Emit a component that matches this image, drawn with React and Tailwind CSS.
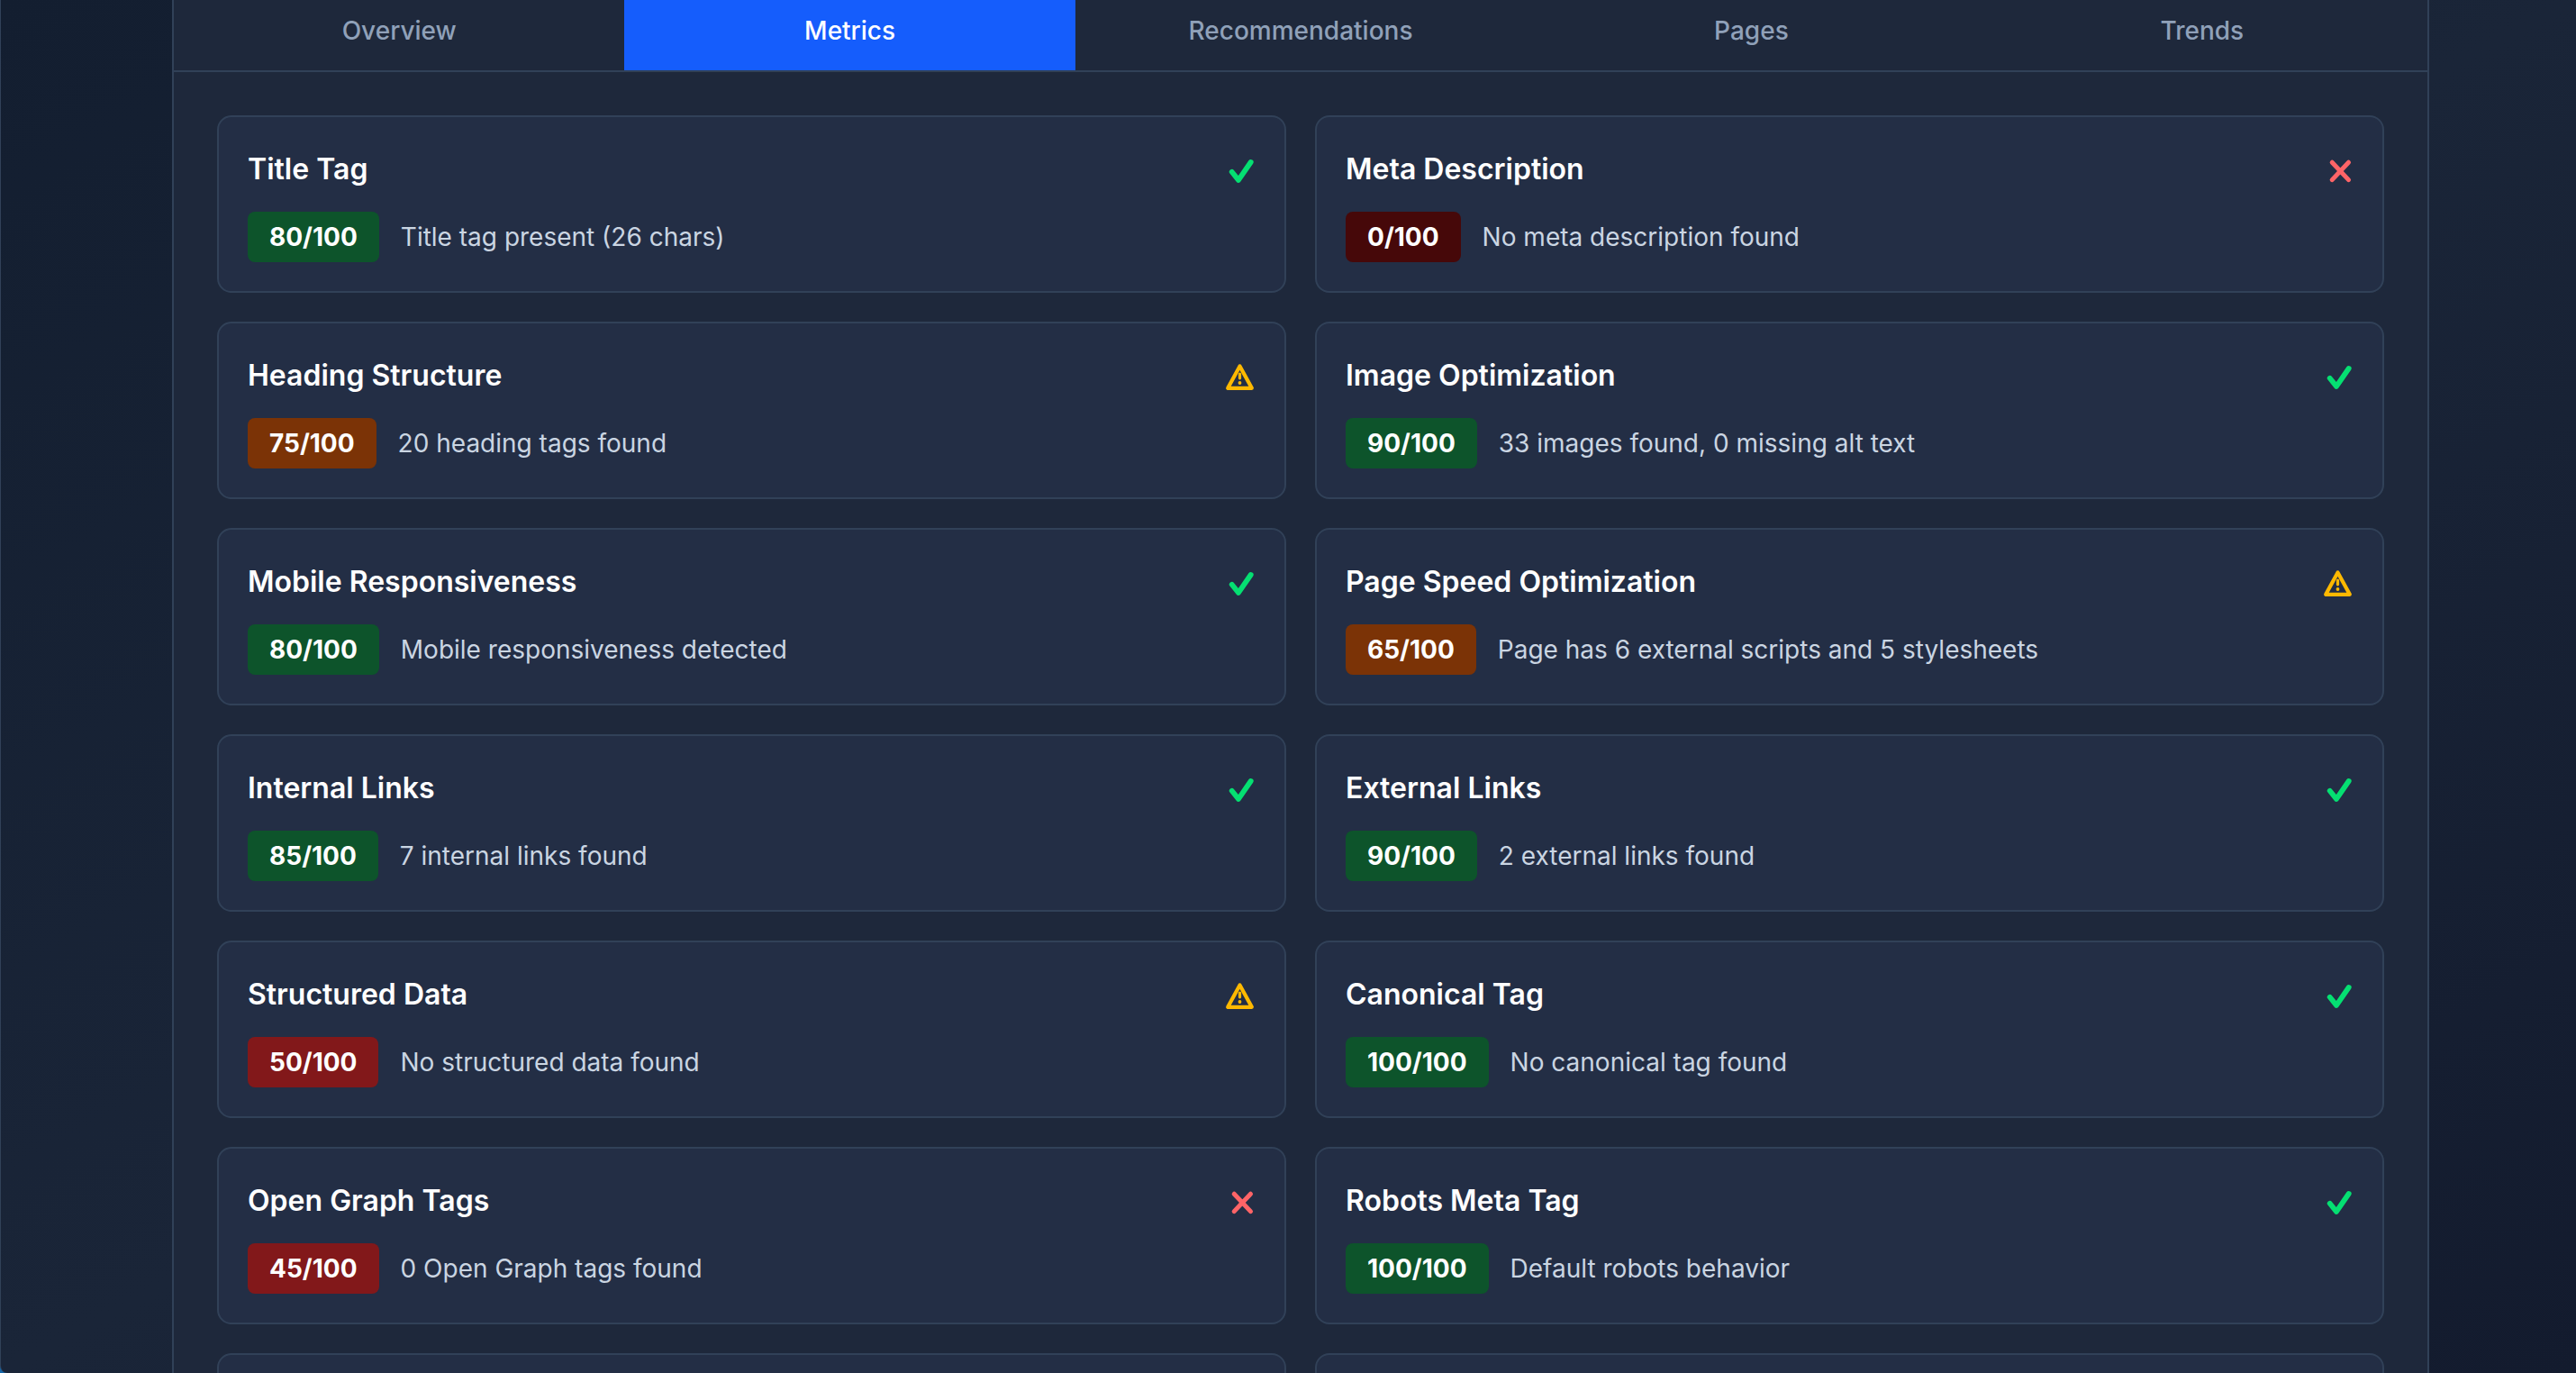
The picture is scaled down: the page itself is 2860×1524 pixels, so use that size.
import React, { useState } from 'react';

const tabs = ['Overview', 'Metrics', 'Recommendations', 'Pages', 'Trends'];

const metrics = [
  { name: 'Title Tag', score: 80, status: 'good', details: 'Title tag present (26 chars)' },
  { name: 'Meta Description', score: 0, status: 'bad', details: 'No meta description found' },
  { name: 'Heading Structure', score: 75, status: 'warning', details: '20 heading tags found' },
  { name: 'Image Optimization', score: 90, status: 'good', details: '33 images found, 0 missing alt text' },
  { name: 'Mobile Responsiveness', score: 80, status: 'good', details: 'Mobile responsiveness detected' },
  { name: 'Page Speed Optimization', score: 65, status: 'warning', details: 'Page has 6 external scripts and 5 stylesheets' },
  { name: 'Internal Links', score: 85, status: 'good', details: '7 internal links found' },
  { name: 'External Links', score: 90, status: 'good', details: '2 external links found' },
  { name: 'Structured Data', score: 50, status: 'warning', details: 'No structured data found' },
  { name: 'Canonical Tag', score: 100, status: 'good', details: 'No canonical tag found' },
  { name: 'Open Graph Tags', score: 45, status: 'bad', details: '0 Open Graph tags found' },
  { name: 'Robots Meta Tag', score: 100, status: 'good', details: 'Default robots behavior' },
];

const getScoreColor = (score) => {
  if (score >= 80) return 'bg-green-900';
  if (score >= 60) return 'bg-amber-900';
  if (score > 0) return 'bg-red-900';
  return 'bg-red-950';
};

const StatusIcon = ({ status }) => {
  if (status === 'good') {
    return (
      <svg className="w-8 h-8 mt-3 text-green-400" viewBox="0 0 32 32" fill="none" stroke="currentColor" strokeWidth="5.8" strokeLinecap="round" strokeLinejoin="round">
        <path d="M5.7 16.7L13 25.9L26.7 6" />
      </svg>
    );
  }
  if (status === 'warning') {
    return (
      <svg className="w-8 h-8 mt-3 overflow-visible text-amber-400" viewBox="0 0 32 32" fill="none" stroke="currentColor" strokeLinecap="round" strokeLinejoin="round">
        <path strokeWidth="4.2" d="M14.5 3.4L1.2 27.8H27.8Z" />
        <path strokeWidth="3.2" d="M14.5 12V16.8" />
        <circle cx="14.5" cy="22" r="1.9" fill="currentColor" stroke="none" />
      </svg>
    );
  }
  return (
    <svg className="w-8 h-8 mt-3 text-red-400" viewBox="0 0 32 32" fill="none" stroke="currentColor" strokeWidth="5" strokeLinecap="round">
      <path d="M8.2 6.2L26.5 25.6M26.5 6.2L8.2 25.6" />
    </svg>
  );
};

const MetricCard = ({ metric }) => (
  <div className="border-2 border-slate-700 bg-[#232e45] rounded-2xl p-8">
    <div className="flex items-start justify-between mb-[21px]">
      <h3 className="text-[32px] leading-13 font-semibold text-white">{metric.name}</h3>
      <StatusIcon status={metric.status} />
    </div>
    <div className="flex items-center">
      <span className={`${getScoreColor(metric.score)} text-white text-[28px] leading-10 font-bold rounded-lg px-6 py-2 mr-6`}>
        {metric.score}/100
      </span>
      <p className="text-[28px] leading-10 text-slate-300">{metric.details}</p>
    </div>
  </div>
);

const App = () => {
  const [activeTab, setActiveTab] = useState('Metrics');

  return (
    <div className="bg-[#1566a8]">
      <div className="h-screen overflow-hidden rounded-bl-lg border-l border-slate-700 bg-gradient-to-br from-[#131e30] via-[#1a2538] to-[#131b2e] pl-[190px] pr-[163px] font-['Inter','Liberation_Sans',sans-serif]">
        <div className="border-x-2 border-slate-700 bg-[#1e283b]">
          <div className="flex border-b-2 border-slate-700">
            {tabs.map((tab) => (
              <button
                key={tab}
                onClick={() => setActiveTab(tab)}
                className={`flex-1 pt-3.5 pb-6 text-[28px] leading-10 font-medium ${
                  activeTab === tab ? 'bg-blue-600 text-white' : 'text-slate-400'
                }`}
              >
                {tab}
              </button>
            ))}
          </div>

          <div className="grid grid-cols-2 gap-8 p-12">
            {metrics.map((metric) => (
              <MetricCard key={metric.name} metric={metric} />
            ))}
            <div className="h-48 border-2 border-slate-700 bg-[#232e45] rounded-2xl" />
            <div className="h-48 border-2 border-slate-700 bg-[#232e45] rounded-2xl" />
          </div>
        </div>
      </div>
    </div>
  );
};

export default App;
